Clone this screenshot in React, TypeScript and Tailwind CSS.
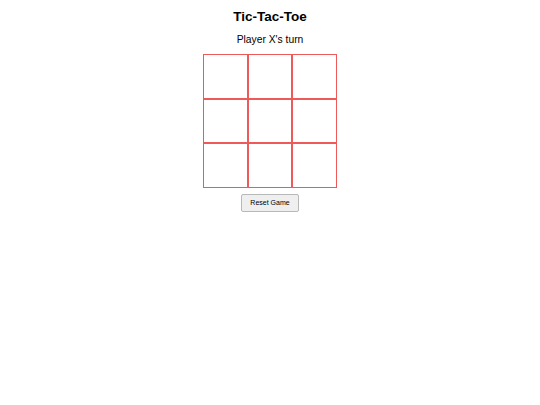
import React, { useState } from 'react';

const App: React.FC = () => {
  const [board, setBoard] = useState<(string | null)[]>(Array(9).fill(null));
  const [xNext, setXNext] = useState(true);

  const handleClick = (i: number) => {
    if (board[i]) return;
    const next = board.slice();
    next[i] = xNext ? 'X' : 'O';
    setBoard(next);
    setXNext(!xNext);
  };

  const reset = () => {
    setBoard(Array(9).fill(null));
    setXNext(true);
  };

  return (
    <div className="flex flex-col items-center pt-[8px] font-['Liberation_Sans',Arial,sans-serif] text-black">
      <h1 className="text-[13.5px] font-bold leading-[17px]">Tic-Tac-Toe</h1>
      <p className="mt-[8px] text-[10.3px] leading-[13px]">Player {xNext ? 'X' : 'O'}'s turn</p>
      <div className="mt-[8px] grid grid-cols-[repeat(3,44.5px)] grid-rows-[repeat(3,44.5px)]">
        {board.map((v, i) => (
          <button
            key={i}
            onClick={() => handleClick(i)}
            className="w-full h-full border border-[#ee5a5a] bg-white text-[18px] font-bold"
          >
            {v}
          </button>
        ))}
      </div>
      <button
        onClick={reset}
        className="mt-[6px] h-[18px] px-[8px] text-[7px] leading-none bg-[#efefef] border border-[#b8b8b8] rounded-[2px]"
      >
        Reset Game
      </button>
    </div>
  );
};

export default App;
